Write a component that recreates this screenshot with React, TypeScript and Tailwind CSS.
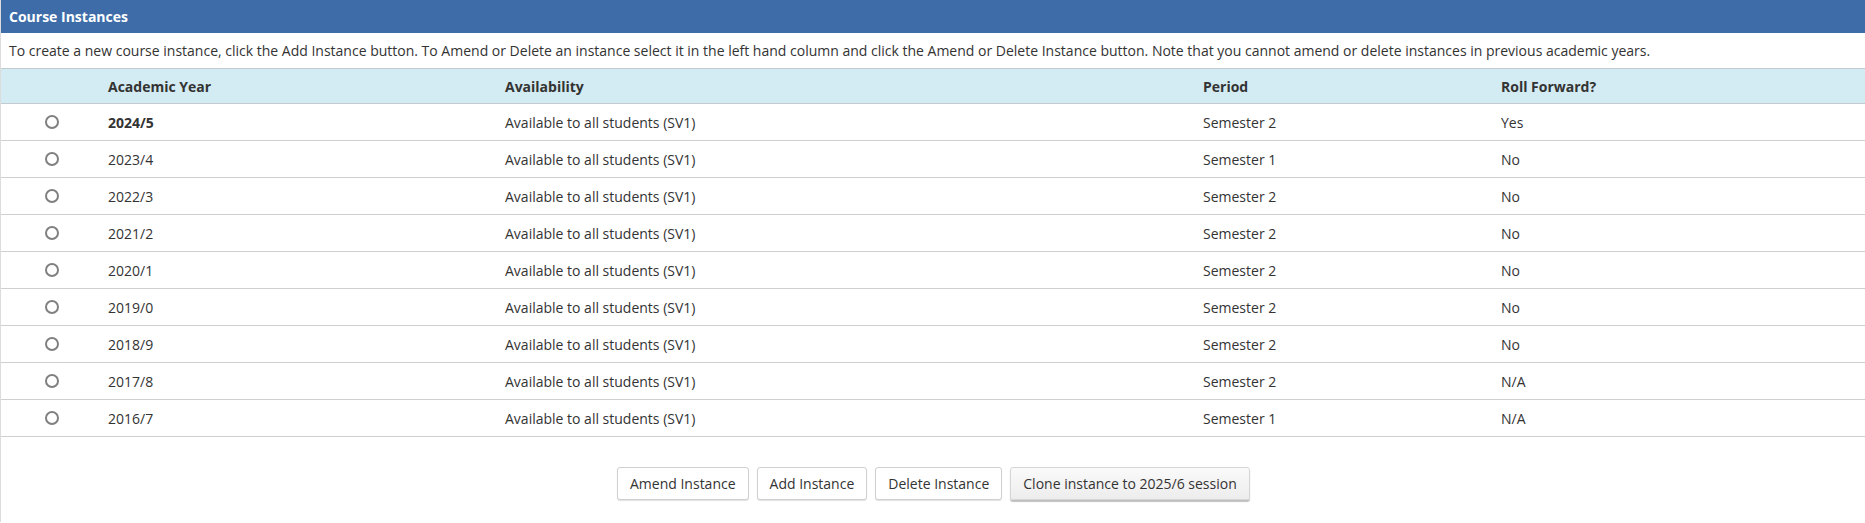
const rows = [
  { year: "2024/5", period: "Semester 2", roll: "Yes", current: true },
  { year: "2023/4", period: "Semester 1", roll: "No" },
  { year: "2022/3", period: "Semester 2", roll: "No" },
  { year: "2021/2", period: "Semester 2", roll: "No" },
  { year: "2020/1", period: "Semester 2", roll: "No" },
  { year: "2019/0", period: "Semester 2", roll: "No" },
  { year: "2018/9", period: "Semester 2", roll: "No" },
  { year: "2017/8", period: "Semester 2", roll: "N/A" },
  { year: "2016/7", period: "Semester 1", roll: "N/A" },
];

const cols = "grid grid-cols-[99px_397px_698px_298px_1fr]";

export default function App() {
  return (
    <div
      className="min-h-screen bg-white text-[14px] text-[#333]"
      style={{ fontFamily: '"Open Sans", "Liberation Sans", sans-serif' }}
    >
      <div className="border-l border-[#dcdcdc]">
        <div className="flex h-[33px] items-center bg-[#3d6ca9] px-2 font-bold text-white">
          Course Instances
        </div>
        <p className="flex h-[35px] items-center px-2">
          To create a new course instance, click the Add Instance button. To Amend or Delete an instance select it in the left hand column and click the Amend or Delete Instance button. Note that you cannot amend or delete instances in previous academic years.
        </p>

        <div className={`${cols} h-[36px] items-center border-y border-[#c4cbd0] bg-[#d3ebf2] font-bold`}>
          <span />
          <span className="px-2">Academic Year</span>
          <span className="px-2">Availability</span>
          <span className="px-2">Period</span>
          <span className="px-2">Roll Forward?</span>
        </div>

        {rows.map((r) => (
          <div key={r.year} className={`${cols} h-[37px] items-center border-b border-[#cfcfcf]`}>
            <span className="flex justify-center pl-[3px]">
              <span className="h-[14px] w-[14px] rounded-full border-2 border-[#808080]" />
            </span>
            <span className={`px-2 ${r.current ? "font-bold" : ""}`}>{r.year}</span>
            <span className="px-2">Available to all students (SV1)</span>
            <span className="px-2">{r.period}</span>
            <span className="px-2">{r.roll}</span>
          </div>
        ))}

        <div className="flex gap-2 pl-[616px] pt-[30px] pb-[22px]">
          {["Amend Instance", "Add Instance", "Delete Instance"].map((b) => (
            <button
              key={b}
              className="h-[33px] rounded-[3px] border border-[#d0d0d0] bg-white px-3 text-[#333] shadow-[0_1px_1px_rgba(0,0,0,0.12)]"
            >
              {b}
            </button>
          ))}
          <button className="h-[33px] rounded-[3px] border border-[#d6d6d6] bg-gradient-to-b from-[#fafafa] to-[#ededed] px-3 text-[#333] shadow-[0_2px_1px_rgba(0,0,0,0.25)]">
            Clone instance to 2025/6 session
          </button>
        </div>
      </div>
    </div>
  );
}
